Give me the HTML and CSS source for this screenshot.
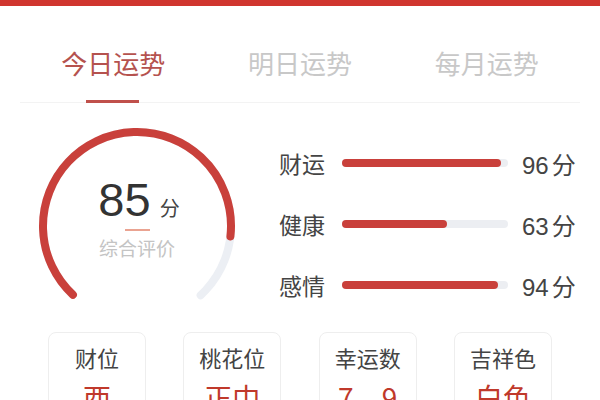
FILE: index.html
```html
<!DOCTYPE html>
<html lang="zh-CN">
<head>
  <meta charset="UTF-8">
  <meta name="viewport" content="width=device-width, initial-scale=1.0">
  <title>今日运势</title>
  <link rel="stylesheet" href="styles.css">
</head>
<body>
  <div class="topbar"></div>
  <div class="page">
    <!-- Tab -->
    <div class="tabs">
      <div class="tab active">今日运势</div>
      <div class="tab">明日运势</div>
      <div class="tab">每月运势</div>
    </div>

    <div class="overview">
      <div class="gauge">
        <svg width="200" height="200" viewBox="0 0 200 200">
          <circle class="track" cx="100" cy="100" r="94" stroke-dasharray="449.6 590.6" transform="rotate(133 100 100)"></circle>
          <circle class="fill" cx="100" cy="100" r="94" stroke-dasharray="382.2 590.6" transform="rotate(133 100 100)"></circle>
        </svg>
        <div class="gauge-text">
          <div class="score"><span class="num">85</span><span class="unit">分</span></div>
          <div class="score-line"></div>
          <div class="score-label">综合评价</div>
        </div>
      </div>

      <div class="bars">
        <div class="bar-row">
          <span class="bar-label">财运</span>
          <div class="bar-track"><div class="bar-fill" style="width: 96%"></div></div>
          <span class="bar-value">96<span class="bar-unit">分</span></span>
        </div>
        <div class="bar-row">
          <span class="bar-label">健康</span>
          <div class="bar-track"><div class="bar-fill" style="width: 63%"></div></div>
          <span class="bar-value">63<span class="bar-unit">分</span></span>
        </div>
        <div class="bar-row">
          <span class="bar-label">感情</span>
          <div class="bar-track"><div class="bar-fill" style="width: 94%"></div></div>
          <span class="bar-value">94<span class="bar-unit">分</span></span>
        </div>
      </div>
    </div>

    <div class="cards">
      <div class="card"><div class="card-title">财位</div><div class="card-value">西</div></div>
      <div class="card"><div class="card-title">桃花位</div><div class="card-value">正中</div></div>
      <div class="card"><div class="card-title">幸运数</div><div class="card-value">7、9</div></div>
      <div class="card"><div class="card-title">吉祥色</div><div class="card-value">白色</div></div>
    </div>
  </div>
</body>
</html>
```

FILE: styles.css
```css
body {
  margin: 0;
  padding: 0;
  background-color: #fff;
  font-family: "Noto Sans CJK SC", sans-serif;
  color: #444;
  overflow: hidden;
}
.topbar {
  height: 6px;
  background-color: #d0352f;
}
.page {
  padding: 0 20px;
}
.tabs {
  display: flex;
  border-bottom: 1px solid #f3f3f3;
}
.tab {
  flex: 1;
  text-align: center;
  font-size: 26px;
  line-height: 36px;
  padding-top: 39px;
  padding-bottom: 21px;
  color: #c8c8c8;
  position: relative;
}
.tab.active {
  color: #b5524e;
}
.tab.active::after {
  content: "";
  position: absolute;
  left: 50%;
  bottom: -1px;
  width: 53px;
  height: 3px;
  margin-left: -27px;
  background-color: #c0504b;
}
.overview {
  display: flex;
  padding-left: 17px;
  margin-top: 23px;
}
.gauge {
  width: 200px;
  height: 200px;
  position: relative;
}
.gauge svg {
  display: block;
}
.gauge circle {
  fill: none;
  stroke-width: 8;
  stroke-linecap: round;
}
.gauge .track {
  stroke: #eceff4;
}
.gauge .fill {
  stroke: #c9403b;
}
.gauge-text {
  position: absolute;
  left: 0;
  top: 0;
  width: 100%;
  display: flex;
  flex-direction: column;
  align-items: center;
  padding-top: 48px;
}
.score {
  display: flex;
  align-items: baseline;
  padding-left: 4px;
}
.score .num {
  font-family: "Liberation Sans", sans-serif;
  font-size: 47px;
  line-height: 52px;
  color: #333;
}
.score .unit {
  font-size: 20px;
  margin-left: 9px;
  color: #444;
}
.score-line {
  width: 25px;
  height: 2px;
  margin-top: 3px;
  background-color: #eaa391;
}
.score-label {
  font-size: 19px;
  line-height: 26px;
  margin-top: 4px;
  color: #c4c4c4;
}
.bars {
  margin-left: 42px;
  padding-top: 22px;
  display: flex;
  flex-direction: column;
  gap: 31px;
}
.bar-row {
  display: flex;
  align-items: center;
  height: 30px;
}
.bar-label {
  width: 63px;
  font-size: 23px;
  color: #444;
}
.bar-track {
  width: 166px;
  height: 8px;
  border-radius: 4px;
  background-color: #eceef2;
}
.bar-fill {
  height: 100%;
  border-radius: 4px;
  background-color: #c9403b;
}
.bar-value {
  margin-left: 14px;
  font-family: "Liberation Sans", sans-serif;
  font-size: 24px;
  color: #444;
}
.bar-unit {
  font-family: "Noto Sans CJK SC", sans-serif;
  margin-left: 3px;
}
.cards {
  display: flex;
  justify-content: space-between;
  margin: 6px 28px 0;
}
.card {
  width: 98px;
  height: 100px;
  box-sizing: border-box;
  border: 1px solid #eeeeee;
  border-radius: 8px;
  text-align: center;
  padding-top: 9px;
}
.card-title {
  font-size: 22px;
  line-height: 30px;
  color: #444;
}
.card-value {
  font-size: 28px;
  line-height: 38px;
  margin-top: 6px;
  color: #c0392b;
}
```
